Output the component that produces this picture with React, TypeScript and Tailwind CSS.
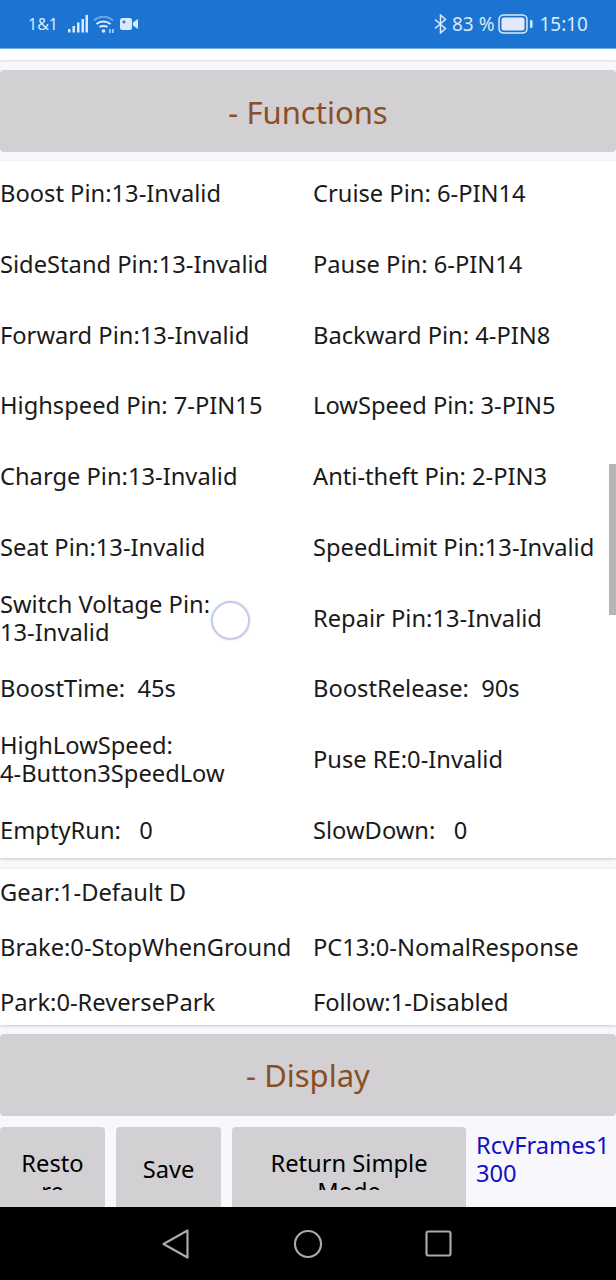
import React from 'react';

const functionRows: [React.ReactNode, React.ReactNode][] = [
  ['Boost Pin:13-Invalid', 'Cruise Pin: 6-PIN14'],
  ['SideStand Pin:13-Invalid', 'Pause Pin: 6-PIN14'],
  ['Forward Pin:13-Invalid', 'Backward Pin: 4-PIN8'],
  ['Highspeed Pin: 7-PIN15', 'LowSpeed Pin: 3-PIN5'],
  ['Charge Pin:13-Invalid', 'Anti-theft Pin: 2-PIN3'],
  ['Seat Pin:13-Invalid', 'SpeedLimit Pin:13-Invalid'],
  [<>Switch Voltage Pin:<br />13-Invalid</>, 'Repair Pin:13-Invalid'],
  ['BoostTime:  45s', 'BoostRelease:  90s'],
  [<>HighLowSpeed:<br />4-Button3SpeedLow</>, 'Puse RE:0-Invalid'],
  ['EmptyRun:   0', 'SlowDown:   0'],
];

const gearRows: [string, string][] = [
  ['Gear:1-Default D', ''],
  ['Brake:0-StopWhenGround', 'PC13:0-NomalResponse'],
  ['Park:0-ReversePark', 'Follow:1-Disabled'],
];

function SectionHeader({ title }: { title: string }) {
  return (
    <div className="h-[82px] pt-[1px] rounded-[4px] bg-[#d2d0d3] flex items-center justify-center text-[31px] text-[#8a4f24]">
      {title}
    </div>
  );
}

function ActionButton({ label, width, offset }: { label: React.ReactNode; width: string; offset?: string }) {
  return (
    <div className={`${width} h-[90px] shrink-0 rounded-[4px] bg-[#d2d0d3] pt-[22px] text-center`}>
      <div className={`h-[41px] overflow-hidden text-black ${offset ?? ''}`}>{label}</div>
    </div>
  );
}

function StatusBar() {
  return (
    <div className="h-[49px] shrink-0 bg-[#1c74d2] border-b border-[#6fb0ee] flex items-center text-[#d9e9fb]">
      <span className="ml-[28px] w-[40px] text-[16px]">1&amp;1</span>
      <svg width="20" height="18" viewBox="0 0 20 18" fill="currentColor">
        <rect x="0" y="14" width="2.5" height="3.5" />
        <rect x="4.5" y="11" width="2.5" height="6.5" />
        <rect x="9" y="7.5" width="2.5" height="10" />
        <rect x="13.5" y="4" width="2.5" height="13.5" />
        <rect x="17.5" y="0" width="2.5" height="17.5" />
      </svg>
      <svg className="ml-[5px]" width="22" height="19" viewBox="0 0 22 19" fill="none" stroke="currentColor" strokeWidth="2">
        <path d="M1 5.5 C6.5 0.5 14.5 0.5 20 5.5" stroke="#6aa8ea" />
        <path d="M3.5 9 C7.5 5.500 13.5 5.500 17.5 9" />
        <path d="M6.5 12 C8.5 10.5 12.5 10.5 14.5 12" />
        <circle cx="10.5" cy="16" r="1.8" fill="currentColor" stroke="none" />
        <path d="M17 14v4M20 14v4" strokeWidth="1.3" />
      </svg>
      <svg className="ml-[5px]" width="18" height="12" viewBox="0 0 18 12" fill="currentColor">
        <rect x="0" y="0" width="12" height="12" rx="2.5" />
        <path d="M13 4.5 18 1v10l-5-3.5z" />
        <circle cx="4" cy="4" r="1.4" fill="#1c74d2" />
      </svg>
      <svg className="ml-auto" width="13" height="20" viewBox="0 0 13 20" fill="none" stroke="currentColor" strokeWidth="1.5">
        <path d="M1 5.5 11.5 14.5 6.5 19V1l5 4.5L1 14.5" />
      </svg>
      <span className="ml-[5px] text-[19px] whitespace-pre">83 %</span>
      <svg className="ml-[4px]" width="35" height="20" viewBox="0 0 35 20" fill="none">
        <rect x="1" y="1" width="28" height="18" rx="4.5" stroke="currentColor" strokeWidth="1.5" />
        <rect x="3.5" y="3.5" width="23" height="13" rx="2.5" fill="#e4e9fb" />
        <rect x="32" y="6" width="2.5" height="8" rx="1" fill="currentColor" />
      </svg>
      <span className="ml-[6px] mr-[28px] text-[19px]">15:10</span>
    </div>
  );
}

export default function App() {
  return (
    <div className="relative w-[616px] h-[1280px] overflow-hidden flex flex-col bg-[#f8f7fb] text-[23.7px] leading-[28px] text-[#1a1a1a] font-['Noto_Sans',sans-serif]">
      <StatusBar />

      <div className="flex-1 min-h-0 overflow-hidden flex flex-col">
        <div className="h-[11px] shrink-0 bg-white shadow-[0_1px_2px_rgba(0,0,0,0.12)]" />
        <div className="mt-[10px] shrink-0">
          <SectionHeader title="- Functions" />
        </div>

        <div className="mt-[9px] shrink-0 bg-white shadow-[0_1px_3px_rgba(0,0,0,0.2)] pt-[4px] grid grid-cols-[313px_1fr] auto-rows-[56px] gap-y-[14.75px]">
          {functionRows.map(([left, right], i) => (
            <React.Fragment key={i}>
              <div className="flex items-center whitespace-pre">{left}</div>
              <div className="flex items-center whitespace-pre">{right}</div>
            </React.Fragment>
          ))}
        </div>

        <div className="mt-[11px] shrink-0 bg-white shadow-[0_1px_3px_rgba(0,0,0,0.2)] grid grid-cols-[313px_1fr] auto-rows-[46px] gap-y-[9px]">
          {gearRows.map(([left, right], i) => (
            <React.Fragment key={i}>
              <div className="flex items-center">{left}</div>
              <div className="flex items-center">{right}</div>
            </React.Fragment>
          ))}
        </div>

        <div className="mt-[9px] shrink-0">
          <SectionHeader title="- Display" />
        </div>

        <div className="mt-[11px] flex gap-[11px]">
          <ActionButton width="w-[105px]" label={<>Resto<br />re</>} />
          <ActionButton width="w-[105px]" label="Save" offset="pt-[6px]" />
          <ActionButton width="w-[234px]" label={<>Return Simple<br />Mode</>} />
          <div className="-ml-[1px] pt-[4px] text-[#1010c8]">RcvFrames1<br />300</div>
        </div>
      </div>

      <div className="h-[73px] shrink-0 bg-black flex items-center justify-center">
        <svg width="300" height="32" viewBox="0 0 300 32" fill="none" stroke="#a9a9a9" strokeWidth="2.2" strokeLinejoin="round">
          <path d="M29.500 2.500 5.500 16 29.500 29.500z" />
          <circle cx="150" cy="16" r="13" />
          <rect x="268.500" y="3.500" width="24" height="24" rx="2" />
        </svg>
      </div>

      {/* scrollbar */}
      <div className="absolute left-[609px] top-[464px] w-[7px] h-[151px] bg-[#b5b5b5]" />
      {/* touch indicator */}
      <div className="absolute left-[211px] top-[601px] w-[39px] h-[39px] rounded-full border-2 border-[#c8c9ea] bg-white/40 shadow-[0_0_2px_rgba(160,160,220,0.5)]" />
    </div>
  );
}
